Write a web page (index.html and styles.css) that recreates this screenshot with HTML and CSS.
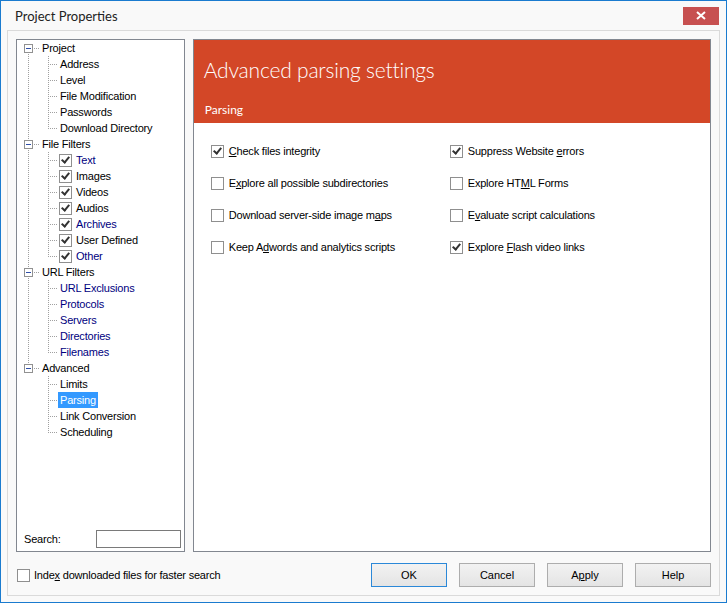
FILE: index.html
```html
<!DOCTYPE html>
<html lang="en">
<head>
  <meta charset="UTF-8" />
  <title>Project Properties</title>
  <link rel="stylesheet" href="styles.css">
</head>
<body>

  <div class="finestra">
    <div class="barra-titolo">
      <span class="titolo">Project Properties</span>
      <span class="chiudi">
        <svg width="10" height="9" viewBox="0 0 10 9"><path d="M1 1 L9 8 M9 1 L1 8" stroke="#fff" stroke-width="2"/></svg>
      </span>
    </div>

    <div class="cornice">
      <div class="pannelli">

        <div class="albero">
          <div class="nodi">
            <div class="riga"><span class="nodo primo"><span class="meno"></span></span><span class="voce">Project</span></div>
            <div class="riga"><span class="ln tubo"></span><span class="ln ti"></span><span class="voce figlio">Address</span></div>
            <div class="riga"><span class="ln tubo"></span><span class="ln ti"></span><span class="voce figlio">Level</span></div>
            <div class="riga"><span class="ln tubo"></span><span class="ln ti"></span><span class="voce figlio">File Modification</span></div>
            <div class="riga"><span class="ln tubo"></span><span class="ln ti"></span><span class="voce figlio">Passwords</span></div>
            <div class="riga"><span class="ln tubo"></span><span class="ln elle"></span><span class="voce figlio">Download Directory</span></div>

            <div class="riga"><span class="nodo"><span class="meno"></span></span><span class="voce">File Filters</span></div>
            <div class="riga"><span class="ln tubo"></span><span class="ln ti"></span><span class="spunta si"></span><span class="voce blu">Text</span></div>
            <div class="riga"><span class="ln tubo"></span><span class="ln ti"></span><span class="spunta si"></span><span class="voce">Images</span></div>
            <div class="riga"><span class="ln tubo"></span><span class="ln ti"></span><span class="spunta si"></span><span class="voce">Videos</span></div>
            <div class="riga"><span class="ln tubo"></span><span class="ln ti"></span><span class="spunta si"></span><span class="voce">Audios</span></div>
            <div class="riga"><span class="ln tubo"></span><span class="ln ti"></span><span class="spunta si"></span><span class="voce blu">Archives</span></div>
            <div class="riga"><span class="ln tubo"></span><span class="ln ti"></span><span class="spunta si"></span><span class="voce">User Defined</span></div>
            <div class="riga"><span class="ln tubo"></span><span class="ln elle"></span><span class="spunta si"></span><span class="voce blu">Other</span></div>

            <div class="riga"><span class="nodo"><span class="meno"></span></span><span class="voce">URL Filters</span></div>
            <div class="riga"><span class="ln tubo"></span><span class="ln ti"></span><span class="voce figlio blu">URL Exclusions</span></div>
            <div class="riga"><span class="ln tubo"></span><span class="ln ti"></span><span class="voce figlio blu">Protocols</span></div>
            <div class="riga"><span class="ln tubo"></span><span class="ln ti"></span><span class="voce figlio blu">Servers</span></div>
            <div class="riga"><span class="ln tubo"></span><span class="ln ti"></span><span class="voce figlio blu">Directories</span></div>
            <div class="riga"><span class="ln tubo"></span><span class="ln elle"></span><span class="voce figlio blu">Filenames</span></div>

            <div class="riga"><span class="nodo ultimo"><span class="meno"></span></span><span class="voce">Advanced</span></div>
            <div class="riga"><span class="ln"></span><span class="ln ti"></span><span class="voce figlio">Limits</span></div>
            <div class="riga"><span class="ln"></span><span class="ln ti"></span><span class="voce figlio scelta">Parsing</span></div>
            <div class="riga"><span class="ln"></span><span class="ln ti"></span><span class="voce figlio">Link Conversion</span></div>
            <div class="riga"><span class="ln"></span><span class="ln elle"></span><span class="voce figlio">Scheduling</span></div>
          </div>

          <div class="ricerca">
            <span>Search:</span>
            <span class="campo"></span>
          </div>
        </div>

        <div class="contenuto">
          <div class="intestazione">
            <div class="titolo-grande">Advanced parsing settings</div>
            <div class="sottotitolo">Parsing</div>
          </div>
          <div class="opzioni">
            <div class="opzione"><span class="spunta si"></span><span><u>C</u>heck files integrity</span></div>
            <div class="opzione"><span class="spunta si"></span><span>Suppress Website <u>e</u>rrors</span></div>
            <div class="opzione"><span class="spunta"></span><span>E<u>x</u>plore all possible subdirectories</span></div>
            <div class="opzione"><span class="spunta"></span><span>Explore HT<u>M</u>L Forms</span></div>
            <div class="opzione"><span class="spunta"></span><span>Download server-side image m<u>a</u>ps</span></div>
            <div class="opzione"><span class="spunta"></span><span>E<u>v</u>aluate script calculations</span></div>
            <div class="opzione"><span class="spunta"></span><span>Keep A<u>d</u>words and analytics scripts</span></div>
            <div class="opzione"><span class="spunta si"></span><span>Explore <u>F</u>lash video links</span></div>
          </div>
        </div>

      </div>

      <div class="fondo">
        <div class="opzione indice"><span class="spunta"></span><span>Inde<u>x</u> downloaded files for faster search</span></div>
        <div class="bottoni">
          <button class="bottone predefinito">OK</button>
          <button class="bottone">Cancel</button>
          <button class="bottone">A<u>p</u>ply</button>
          <button class="bottone">Help</button>
        </div>
      </div>
    </div>
  </div>

</body>
</html>
```

FILE: styles.css
```css
html, body {
  margin: 0;
  padding: 0;
  background: #f9f9f9;
  font-family: "Liberation Sans", Arial, sans-serif;
  font-size: 11px;
  letter-spacing: -0.2px;
  color: #000;
}

.finestra {
  width: 727px;
  height: 603px;
  box-sizing: border-box;
  border: 1px solid #1a7bcf;
  background: #f9f9f9;
  display: flex;
  flex-direction: column;
}

.barra-titolo {
  height: 29px;
  display: flex;
  align-items: center;
  justify-content: space-between;
  padding-left: 14px;
}

.titolo {
  font-family: Lato, "Noto Sans", sans-serif;
  font-size: 13px;
  letter-spacing: 0;
  color: #222;
}

.chiudi {
  width: 36px;
  height: 18px;
  margin-right: 7px;
  background: #c75050;
  display: flex;
  align-items: center;
  justify-content: center;
}

.cornice {
  margin: 0 6px;
  height: 566px;
  box-sizing: border-box;
  border: 1px solid #dadada;
  padding: 8px 8px 8px 8px;
  display: flex;
  flex-direction: column;
}

.pannelli {
  display: flex;
  gap: 8px;
  height: 513px;
}

/* albero a sinistra */

.albero {
  width: 169px;
  box-sizing: border-box;
  border: 1px solid #828790;
  background: #fff;
  display: flex;
  flex-direction: column;
}

.nodi {
  flex: 1;
}

.riga {
  height: 16px;
  display: flex;
  align-items: center;
}

.ln, .nodo {
  width: 20px;
  height: 16px;
  flex: none;
  position: relative;
}

.nodo {
  width: 23px;
}

.ln.tubo::before,
.ln.ti::before,
.ln.elle::before,
.nodo::before {
  content: '';
  position: absolute;
  left: 11px;
  top: 0;
  width: 1px;
  height: 16px;
  background: repeating-linear-gradient(to bottom, #a0a0a0 0 1px, transparent 1px 2px);
}

.ln.elle::before {
  height: 9px;
}

.nodo.primo::before {
  top: 8px;
  height: 8px;
}

.nodo.ultimo::before {
  height: 8px;
}

.ln.ti::after,
.ln.elle::after,
.nodo::after {
  content: '';
  position: absolute;
  left: 12px;
  top: 8px;
  width: 8px;
  height: 1px;
  background: repeating-linear-gradient(to right, transparent 0 1px, #a0a0a0 1px 2px);
}

.nodo::after {
  left: 16px;
  width: 7px;
}

.meno {
  position: absolute;
  left: 7px;
  top: 4px;
  width: 9px;
  height: 9px;
  box-sizing: border-box;
  border: 1px solid #919191;
  background: #fff;
  z-index: 1;
}

.meno::before {
  content: '';
  position: absolute;
  left: 1px;
  top: 3px;
  width: 5px;
  height: 1px;
  background: #2f4fa8;
}

.voce {
  padding: 0 2px;
  line-height: 16px;
  white-space: nowrap;
}

.voce.figlio {
  margin-left: 1px;
}

.albero .spunta {
  margin-left: 2px;
  margin-right: 2px;
}

.blu {
  color: #000080;
}

.scelta {
  background: #3399ff;
  color: #fff;
}

.ricerca {
  display: flex;
  align-items: center;
  justify-content: space-between;
  padding: 0 3px 3px 7px;
}

.campo {
  width: 85px;
  height: 18px;
  box-sizing: border-box;
  border: 1px solid #7a7a7a;
  background: #fff;
}

/* caselle */

.spunta {
  width: 13px;
  height: 13px;
  box-sizing: border-box;
  border: 1px solid #8f8f8f;
  background: #fff;
  flex: none;
  position: relative;
}

.spunta.si::after {
  content: '';
  position: absolute;
  left: 3px;
  top: 0px;
  width: 3px;
  height: 6px;
  border: solid #333;
  border-width: 0 2px 2px 0;
  transform: rotate(40deg);
}

/* pannello destro */

.contenuto {
  width: 519px;
  box-sizing: border-box;
  border: 1px solid #828790;
  background: #fff;
}

.intestazione {
  height: 83px;
  background: #d34727;
  color: #fff;
  padding-left: 10px;
}

.titolo-grande {
  font-family: Lato, "Noto Sans", sans-serif;
  font-size: 21px;
  font-weight: 300;
  letter-spacing: -0.2px;
  padding-top: 18px;
  line-height: 24px;
}

.sottotitolo {
  font-family: Lato, "Noto Sans", sans-serif;
  font-size: 12px;
  letter-spacing: 0;
  margin-top: 20px;
  padding-left: 1px;
}

.opzioni {
  display: grid;
  grid-template-columns: 239px 1fr;
  row-gap: 16px;
  padding: 20px 0 0 17px;
}

.opzione {
  display: flex;
  align-items: center;
  gap: 5px;
  height: 16px;
  white-space: nowrap;
}

/* fondo */

.fondo {
  margin-top: 11px;
  height: 24px;
  display: flex;
  align-items: center;
  justify-content: space-between;
}

.indice {
  margin-left: 1px;
  gap: 4px;
}

.bottoni {
  display: flex;
  gap: 12px;
}

.bottone {
  width: 76px;
  height: 24px;
  box-sizing: border-box;
  border: 1px solid #adadad;
  background: linear-gradient(#f2f2f2, #e4e4e4);
  font-family: "Liberation Sans", Arial, sans-serif;
  font-size: 11px;
  color: #000;
  padding: 0;
}

.bottone.predefinito {
  border-color: #2b88d8;
}
```
